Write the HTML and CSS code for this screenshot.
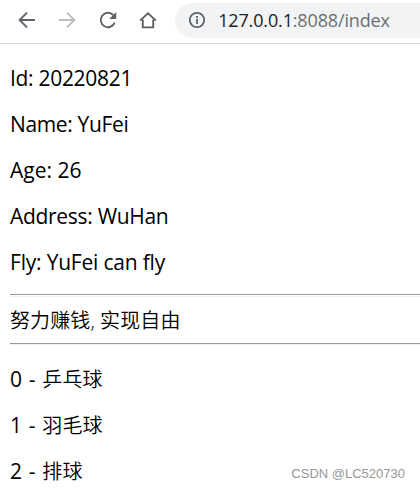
FILE: index.html
```html
<!DOCTYPE html>
<html lang="zh">
<head>
    <meta charset="UTF-8">
    <title>index</title>
    <link rel="stylesheet" href="styles.css">
</head>
<body>
    <div class="toolbar">
        <svg class="icon" viewBox="0 0 20 20"><path d="M18 10H3M10 2.6L2.6 10l7.4 7.4"/></svg>
        <svg class="icon disabled" viewBox="0 0 20 20"><path d="M2 10h15M10 2.6l7.4 7.4-7.4 7.4"/></svg>
        <svg class="icon" viewBox="0 0 20 20"><path d="M16.7 12.6A7.2 7.2 0 1 1 15.2 5"/><path class="solid" d="M18.2 2v7h-7z"/></svg>
        <svg class="icon" viewBox="0 0 20 20"><path d="M2 10.6L10 3.2l8 7.4M4.8 9.4v8h10.4v-8"/></svg>
        <div class="address-bar">
            <svg class="info" viewBox="0 0 18 18"><circle cx="9" cy="9" r="7.2"/><path d="M9 8v5M9 5v2"/></svg>
            <span class="url"><span class="host">127.0.0.1</span>:8088/index</span>
        </div>
    </div>
    <div class="content">
        <p class="id">Id: 20220821</p>
        <p class="name">Name: YuFei</p>
        <p class="age">Age: 26</p>
        <p class="address">Address: WuHan</p>
        <p class="fly">Fly: YuFei can fly</p>
        <hr class="tall">
        <div class="cjk slogan">努力赚钱, 实现自由</div>
        <hr>
        <p class="item">0 - <span class="cjk">乒乓球</span></p>
        <p class="item">1 - <span class="cjk">羽毛球</span></p>
        <p class="item">2 - <span class="cjk">排球</span></p>
    </div>
    <div class="watermark">CSDN @LC520730</div>
</body>
</html>
```

FILE: styles.css
```css
body {
    margin: 0;
    height: 489px;
    overflow: hidden;
    background: #fff;
    color: #000;
    font-family: "Open Sans", "Noto Sans CJK SC", sans-serif;
}

.toolbar {
    display: flex;
    align-items: center;
    gap: 20.3px;
    box-sizing: border-box;
    height: 44px;
    padding: 0 0 3px 17px;
    border-bottom: 1px solid #d9dadc;
}

.icon {
    flex: none;
    width: 20px;
    height: 20px;
    fill: none;
    stroke: #5f6368;
    stroke-width: 1.9;
}

.icon.disabled {
    stroke: #bbbdbf;
}

.icon .solid {
    fill: #5f6368;
    stroke: none;
}

.address-bar {
    display: flex;
    flex: 1;
    align-items: center;
    gap: 12px;
    height: 35px;
    margin-left: -3px;
    padding-left: 13px;
    border-radius: 18px 0 0 18px;
    background: #f1f3f4;
}

.info {
    width: 18px;
    height: 18px;
    fill: none;
    stroke: #5f6368;
    stroke-width: 1.8;
}

.url {
    color: #6b6f73;
    font-size: 18px;
    letter-spacing: -0.15px;
    white-space: nowrap;
}

.host {
    color: #202124;
}

.content {
    padding-left: 10px;
    font-size: 21px;
    line-height: 28px;
    white-space: nowrap;
}

p {
    height: 26px;
    margin: 20px 0;
}

.id, .address {
    letter-spacing: -0.3px;
}

.name {
    letter-spacing: -0.35px;
}

.fly {
    letter-spacing: -0.2px;
}

hr {
    box-sizing: border-box;
    height: 2px;
    margin: 10px 0;
    border: 0;
    border-top: 1px solid #999;
    border-bottom: 1px solid #eee;
}

hr.tall {
    height: 3px;
}

.item {
    word-spacing: 1.3px;
}

.cjk {
    font-size: 20px;
    font-weight: 350;
    letter-spacing: 0.1px;
}

.slogan {
    height: 26px;
}

.watermark {
    position: absolute;
    right: 15px;
    bottom: 6px;
    color: #969696;
    font-family: "Liberation Sans", Arial, sans-serif;
    font-size: 13px;
    line-height: 18px;
}
```
